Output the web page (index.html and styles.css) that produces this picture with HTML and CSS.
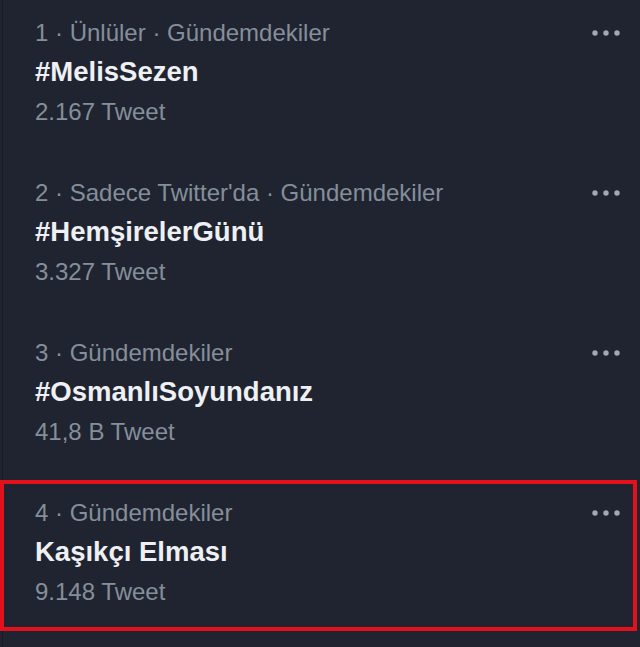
FILE: index.html
```html
<!DOCTYPE html>
<html lang="tr">
<head>
    <meta charset="UTF-8">
    <meta name="viewport" content="width=device-width, initial-scale=1.0">
    <title>Gündemdekiler</title>
<link rel="stylesheet" href="styles.css">
</head>

<body>
    <div class="trends">
        <div class="trend">
            <div class="trend-meta">
                <span>1 · Ünlüler · Gündemdekiler</span>
                <svg class="more" width="28" height="6" viewBox="0 0 28 6"><circle cx="3" cy="3" r="2.7"/><circle cx="14" cy="3" r="2.7"/><circle cx="25" cy="3" r="2.7"/></svg>
            </div>
            <div class="trend-name">#MelisSezen</div>
            <div class="trend-count">2.167 Tweet</div>
        </div>
        <div class="trend">
            <div class="trend-meta">
                <span>2 · Sadece Twitter'da · Gündemdekiler</span>
                <svg class="more" width="28" height="6" viewBox="0 0 28 6"><circle cx="3" cy="3" r="2.7"/><circle cx="14" cy="3" r="2.7"/><circle cx="25" cy="3" r="2.7"/></svg>
            </div>
            <div class="trend-name">#HemşirelerGünü</div>
            <div class="trend-count">3.327 Tweet</div>
        </div>
        <div class="trend">
            <div class="trend-meta">
                <span>3 · Gündemdekiler</span>
                <svg class="more" width="28" height="6" viewBox="0 0 28 6"><circle cx="3" cy="3" r="2.7"/><circle cx="14" cy="3" r="2.7"/><circle cx="25" cy="3" r="2.7"/></svg>
            </div>
            <div class="trend-name">#OsmanlıSoyundanız</div>
            <div class="trend-count">41,8 B Tweet</div>
        </div>
        <div class="trend highlight">
            <div class="trend-meta">
                <span>4 · Gündemdekiler</span>
                <svg class="more" width="28" height="6" viewBox="0 0 28 6"><circle cx="3" cy="3" r="2.7"/><circle cx="14" cy="3" r="2.7"/><circle cx="25" cy="3" r="2.7"/></svg>
            </div>
            <div class="trend-name">Kaşıkçı Elması</div>
            <div class="trend-count">9.148 Tweet</div>
        </div>
    </div>
</body>
</html>
```

FILE: styles.css
```css
body {
    margin: 0;
    background-color: #1f2430;
    font-family: "Liberation Sans", Arial, sans-serif;
    height: 647px;
    overflow: hidden;
}

.trends {
    margin-left: 2px;
    border-left: 1px solid #171b24;
    min-height: 647px;
}

.trend {
    box-sizing: border-box;
    height: 160px;
    padding: 19px 20px 0 32px;
}

.trend-meta {
    display: flex;
    justify-content: space-between;
    align-items: center;
    font-size: 24px;
    line-height: 28px;
    color: #858f9b;
}

.more {
    fill: #a2a9b3;
}

.trend-name {
    margin-top: 8px;
    font-size: 27.5px;
    line-height: 34px;
    font-weight: bold;
    color: #eef0f3;
}

.trend-count {
    margin-top: 9px;
    font-size: 24px;
    line-height: 28px;
    color: #858f9b;
}

.highlight {
    height: 151px;
    margin: 0 3px 0 -3px;
    padding: 15px 13px 0 31px;
    border: 4px solid #e3111b;
}
```
